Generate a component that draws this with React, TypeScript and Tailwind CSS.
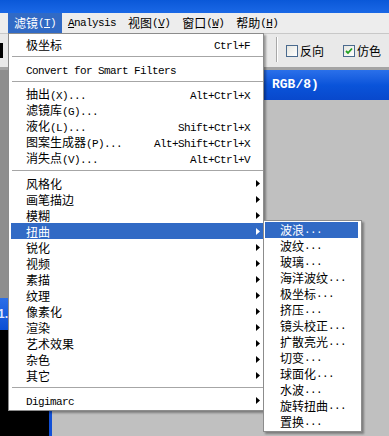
import React from 'react';

type Item = { label: string; shortcut?: string; sub?: boolean; active?: boolean } | 'sep';

const CJK = /([\u2e80-\u9fff\uff00-\uffef]+)/;

// CJK runs get the CJK font at 12px, latin runs a 6px-wide mono like SimSun
function Txt({ text }: { text: string }) {
    return (
        <>
            {text.split(CJK).filter(Boolean).map((part, i) =>
                CJK.test(part) ? (
                    <span key={i} className="font-['Noto_Sans_CJK_SC',sans-serif] text-[12px]">{part}</span>
                ) : (
                    <span key={i} className="font-['Liberation_Mono',monospace] text-[11px] tracking-[-0.6px] whitespace-pre">{part}</span>
                )
            )}
        </>
    );
}

const subLabels = ['风格化', '画笔描边', '模糊', '扭曲', '锐化', '视频', '素描', '纹理', '像素化', '渲染', '艺术效果', '杂色', '其它'];

const mainItems: Item[] = [
    { label: '极坐标', shortcut: 'Ctrl+F' },
    'sep',
    { label: 'Convert for Smart Filters' },
    'sep',
    { label: '抽出(X)...', shortcut: 'Alt+Ctrl+X' },
    { label: '滤镜库(G)...' },
    { label: '液化(L)...', shortcut: 'Shift+Ctrl+X' },
    { label: '图案生成器(P)...', shortcut: 'Alt+Shift+Ctrl+X' },
    { label: '消失点(V)...', shortcut: 'Alt+Ctrl+V' },
    'sep',
    ...subLabels.map(l => ({ label: l, sub: true, active: l === '扭曲' })),
    'sep',
    { label: 'Digimarc', sub: true },
];

const distortItems = ['波浪...', '波纹...', '玻璃...', '海洋波纹...', '极坐标...', '挤压...', '镜头校正...', '扩散亮光...', '切变...', '球面化...', '水波...', '旋转扭曲...', '置换...'];

const menuBar = [
    { cn: '滤镜', key: 'T', active: true },
    { en: 'Analysis' },
    { cn: '视图', key: 'V' },
    { cn: '窗口', key: 'W' },
    { cn: '帮助', key: 'H' },
];

function Arrow({ white }: { white?: boolean }) {
    return (
        <svg width="4" height="7" viewBox="0 0 4 7">
            <polygon points="0,0 4,3.5 0,7" fill={white ? '#ffffff' : '#000000'} />
        </svg>
    );
}

function Checkbox({ checked }: { checked?: boolean }) {
    return (
        <div className="w-[12px] h-[12px] border border-[#4a6a8e] bg-gradient-to-br from-[#e6e6e0] to-white flex items-center justify-center">
            {checked && (
                <svg width="8" height="8" viewBox="0 0 8 8">
                    <path d="M1 4 L3 6 L7 1.5" stroke="#21a121" strokeWidth="1.8" fill="none" />
                </svg>
            )}
        </div>
    );
}

export default function App() {
    return (
        <div className="w-[389px] h-[436px] overflow-hidden relative flex flex-col bg-[#c0c0c0] text-black">
            {/* window title bar */}
            <div className="h-[13px] bg-gradient-to-b from-[#0a58d8] to-[#1a68e6]" />

            {/* menu bar */}
            <div className="h-[20px] bg-[#ededed] flex pl-[8px]">
                {menuBar.map((m, i) => (
                    <div
                        key={i}
                        className={`flex items-center pl-[6px] pr-[6px] leading-[20px] whitespace-pre ${m.active ? 'bg-[#316ac5] text-white' : ''}`}
                    >
                        {m.cn ? (
                            <>
                                <Txt text={m.cn} />
                                <span className="font-['Liberation_Mono',monospace] text-[11px] tracking-[-0.6px]">
                                    (<span className="underline">{m.key}</span>)
                                </span>
                            </>
                        ) : (
                            <span className="font-['Liberation_Mono',monospace] text-[11px] tracking-[-0.6px]">
                                <span className="underline">A</span>nalysis
                            </span>
                        )}
                    </div>
                ))}
            </div>
            <div className="h-px bg-[#c8c8c8]" />

            {/* options bar */}
            <div className="h-[33px] bg-[#e9e9e9] flex items-center">
                <div className="w-[3px] h-[15px] bg-black" />
                <div className="ml-auto w-[2px] h-[25px] -mt-[2px] flex">
                    <div className="w-px bg-[#a8a8a8]" />
                    <div className="w-px bg-white" />
                </div>
                <div className="ml-[8px] flex items-center gap-[2px]">
                    <Checkbox />
                    <Txt text="反向" />
                </div>
                <div className="ml-[19px] mr-[8px] flex items-center gap-[2px]">
                    <Checkbox checked />
                    <Txt text="仿色" />
                </div>
            </div>
            <div className="h-[3px] bg-[#a4a4a4]" />

            {/* workspace with document windows */}
            <div className="relative flex-1 bg-[#c0c0c0]">
                <div className="absolute left-0 top-0 w-[8px] h-[228px] bg-[#8e8e8e]" />
                <div className="absolute left-0 top-[228px] w-[52px] bottom-0 flex flex-col">
                    <div className="h-[32px] bg-gradient-to-b from-[#2a6ee8] to-[#0a4ed4] flex items-center -ml-[2px] text-[#dfe8ff] font-['Liberation_Sans',sans-serif] font-bold text-[12px]">
                        1.0
                    </div>
                    <div className="flex-1 bg-black border-r-[3px] border-[#1250d6]" />
                </div>
                <div className="absolute left-[264px] top-0 right-0 bottom-0 flex flex-col">
                    <div className="h-[30px] bg-gradient-to-b from-[#2a70ea] via-[#0a54da] to-[#0848cc] flex items-center pl-[8px] text-white font-['Liberation_Mono',monospace] font-bold text-[13px]">
                        RGB/8)
                    </div>
                    <div className="flex-1 bg-[#c0c0c0]" />
                </div>
            </div>

            {/* filter menu */}
            <div className="absolute left-[8px] top-[33px] w-[256px] bg-white border border-[#8c8c8c] pt-[2px] pb-[2px] pl-[2px] shadow-[2px_2px_2px_rgba(0,0,0,0.35)]">
                {mainItems.map((it, i) =>
                    it === 'sep' ? (
                        <div key={i} className="h-[9px] flex items-center pl-[1px]">
                            <div className="h-px w-full bg-[#a6a6a6]" />
                        </div>
                    ) : (
                        <div
                            key={i}
                            className={`h-[16px] flex items-center pl-[15px] leading-[16px] ${it.active ? 'bg-[#316ac5] text-white' : ''}`}
                        >
                            <div className="flex-1 whitespace-pre"><Txt text={it.label} /></div>
                            {it.shortcut && <div className="whitespace-pre"><Txt text={it.shortcut} /></div>}
                            <div className="w-[13px] pl-[6px] flex items-center">
                                {it.sub && <Arrow white={it.active} />}
                            </div>
                        </div>
                    )
                )}
            </div>

            {/* distort submenu */}
            <div className="absolute left-[263px] top-[220px] w-[99px] bg-white border border-[#8c8c8c] pt-px pb-px pl-px pr-[3px] shadow-[2px_2px_2px_rgba(0,0,0,0.35)]">
                {distortItems.map((label, i) => (
                    <div
                        key={i}
                        className={`h-[16px] flex items-center pl-[15px] leading-[16px] whitespace-pre ${i === 0 ? 'bg-[#316ac5] text-white' : ''}`}
                    >
                        <Txt text={label} />
                    </div>
                ))}
            </div>
        </div>
    );
}
